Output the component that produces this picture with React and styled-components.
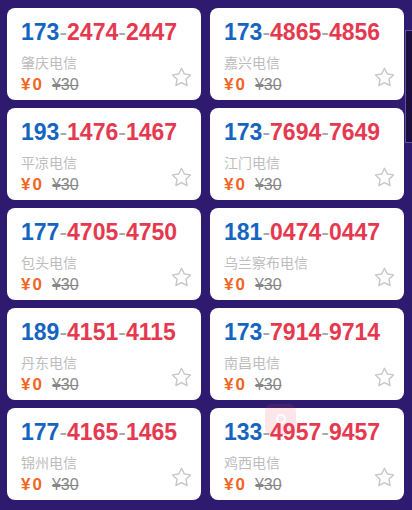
import React from "react";
import styled, { createGlobalStyle } from "styled-components";

const Global = createGlobalStyle`
  html, body { margin: 0; padding: 0; background: #2e1a6e; }
  body { font-family: Arial, "Liberation Sans", "Noto Sans CJK SC", sans-serif; }
`;

const Page = styled.div`
  position: relative;
  width: 412px;
  height: 510px;
  overflow: hidden;
  background: #2e1a6e;
  box-sizing: border-box;
  padding: 8px 8px 0 7px;
`;

const Grid = styled.div`
  display: grid;
  grid-template-columns: 1fr 1fr;
  column-gap: 9px;
  row-gap: 8px;
`;

const Card = styled.div`
  background: #fff;
  border-radius: 8px;
  height: 92px;
  box-sizing: border-box;
  padding: 11px 8px 0 14px;
  display: flex;
  flex-direction: column;
`;

const Number = styled.div`
  font-family: Arial, "Liberation Sans", sans-serif;
  font-weight: 700;
  font-size: 23px;
  line-height: 27px;
  white-space: nowrap;
`;

const Blue = styled.span`
  color: #1565c0;
`;
const Red = styled.span`
  color: #e53950;
`;
const Dash = styled.span`
  color: #a8a8a8;
  font-weight: 400;
`;

const Bottom = styled.div`
  display: flex;
  align-items: flex-end;
  justify-content: space-between;
  margin-top: 8px;
`;

const Info = styled.div`
  display: flex;
  flex-direction: column;
`;

const City = styled.div`
  font-size: 14px;
  line-height: 18px;
  color: #bdbdbd;
`;

const Prices = styled.div`
  display: flex;
  align-items: baseline;
  gap: 8px;
  margin-top: 3px;
`;

const Price = styled.span`
  color: #f26522;
  font-weight: 700;
  font-size: 17px;
  line-height: 20px;
  letter-spacing: 2px;
`;

const Old = styled.span`
  color: #868686;
  font-size: 16px;
  text-decoration: line-through;
`;

const StarBtn = styled.div`
  width: 24px;
  height: 24px;
  margin-bottom: 6px;
  display: flex;
  align-items: center;
  justify-content: center;
`;

const Float = styled.div`
  position: absolute;
  left: 265px;
  top: 404px;
  width: 31px;
  height: 31px;
  border-radius: 7px;
  background: #ee4a5e;
  opacity: 0.13;
  display: flex;
  align-items: center;
  justify-content: center;
`;

const SidePanel = styled.div`
  position: absolute;
  left: 405px;
  top: 30px;
  width: 20px;
  height: 111px;
  background: #1a0f3e;
  border: 1px solid #6453a6;
`;

const Star = () => (
  <svg width="23" height="23" viewBox="0 0 24 24" fill="none" stroke="#c8c8c8" strokeWidth="1.5" strokeLinejoin="round">
    <path d="M12 2.4l2.9 6 6.5.9-4.75 4.55 1.17 6.5L12 17.25 6.18 20.35l1.17-6.5L2.6 9.3l6.5-.9z" />
  </svg>
);

const data = [
  ["173", "2474", "2447", "肇庆电信"],
  ["173", "4865", "4856", "嘉兴电信"],
  ["193", "1476", "1467", "平凉电信"],
  ["173", "7694", "7649", "江门电信"],
  ["177", "4705", "4750", "包头电信"],
  ["181", "0474", "0447", "乌兰察布电信"],
  ["189", "4151", "4115", "丹东电信"],
  ["173", "7914", "9714", "南昌电信"],
  ["177", "4165", "1465", "锦州电信"],
  ["133", "4957", "9457", "鸡西电信"],
];

export default function App() {
  return (
    <>
      <Global />
      <Page>
        <Grid>
          {data.map(([a, b, c, city], i) => (
            <Card key={i}>
              <Number>
                <Blue>{a}</Blue>
                <Dash>-</Dash>
                <Red>{b}</Red>
                <Dash>-</Dash>
                <Red>{c}</Red>
              </Number>
              <Bottom>
                <Info>
                  <City>{city}</City>
                  <Prices>
                    <Price>¥0</Price>
                    <Old>¥30</Old>
                  </Prices>
                </Info>
                <StarBtn>
                  <Star />
                </StarBtn>
              </Bottom>
            </Card>
          ))}
        </Grid>
        <Float>
          <svg width="16" height="16" viewBox="0 0 16 16" fill="none" stroke="#fff" strokeWidth="2">
            <circle cx="8" cy="7" r="4" />
          </svg>
        </Float>
        <SidePanel />
      </Page>
    </>
  );
}
